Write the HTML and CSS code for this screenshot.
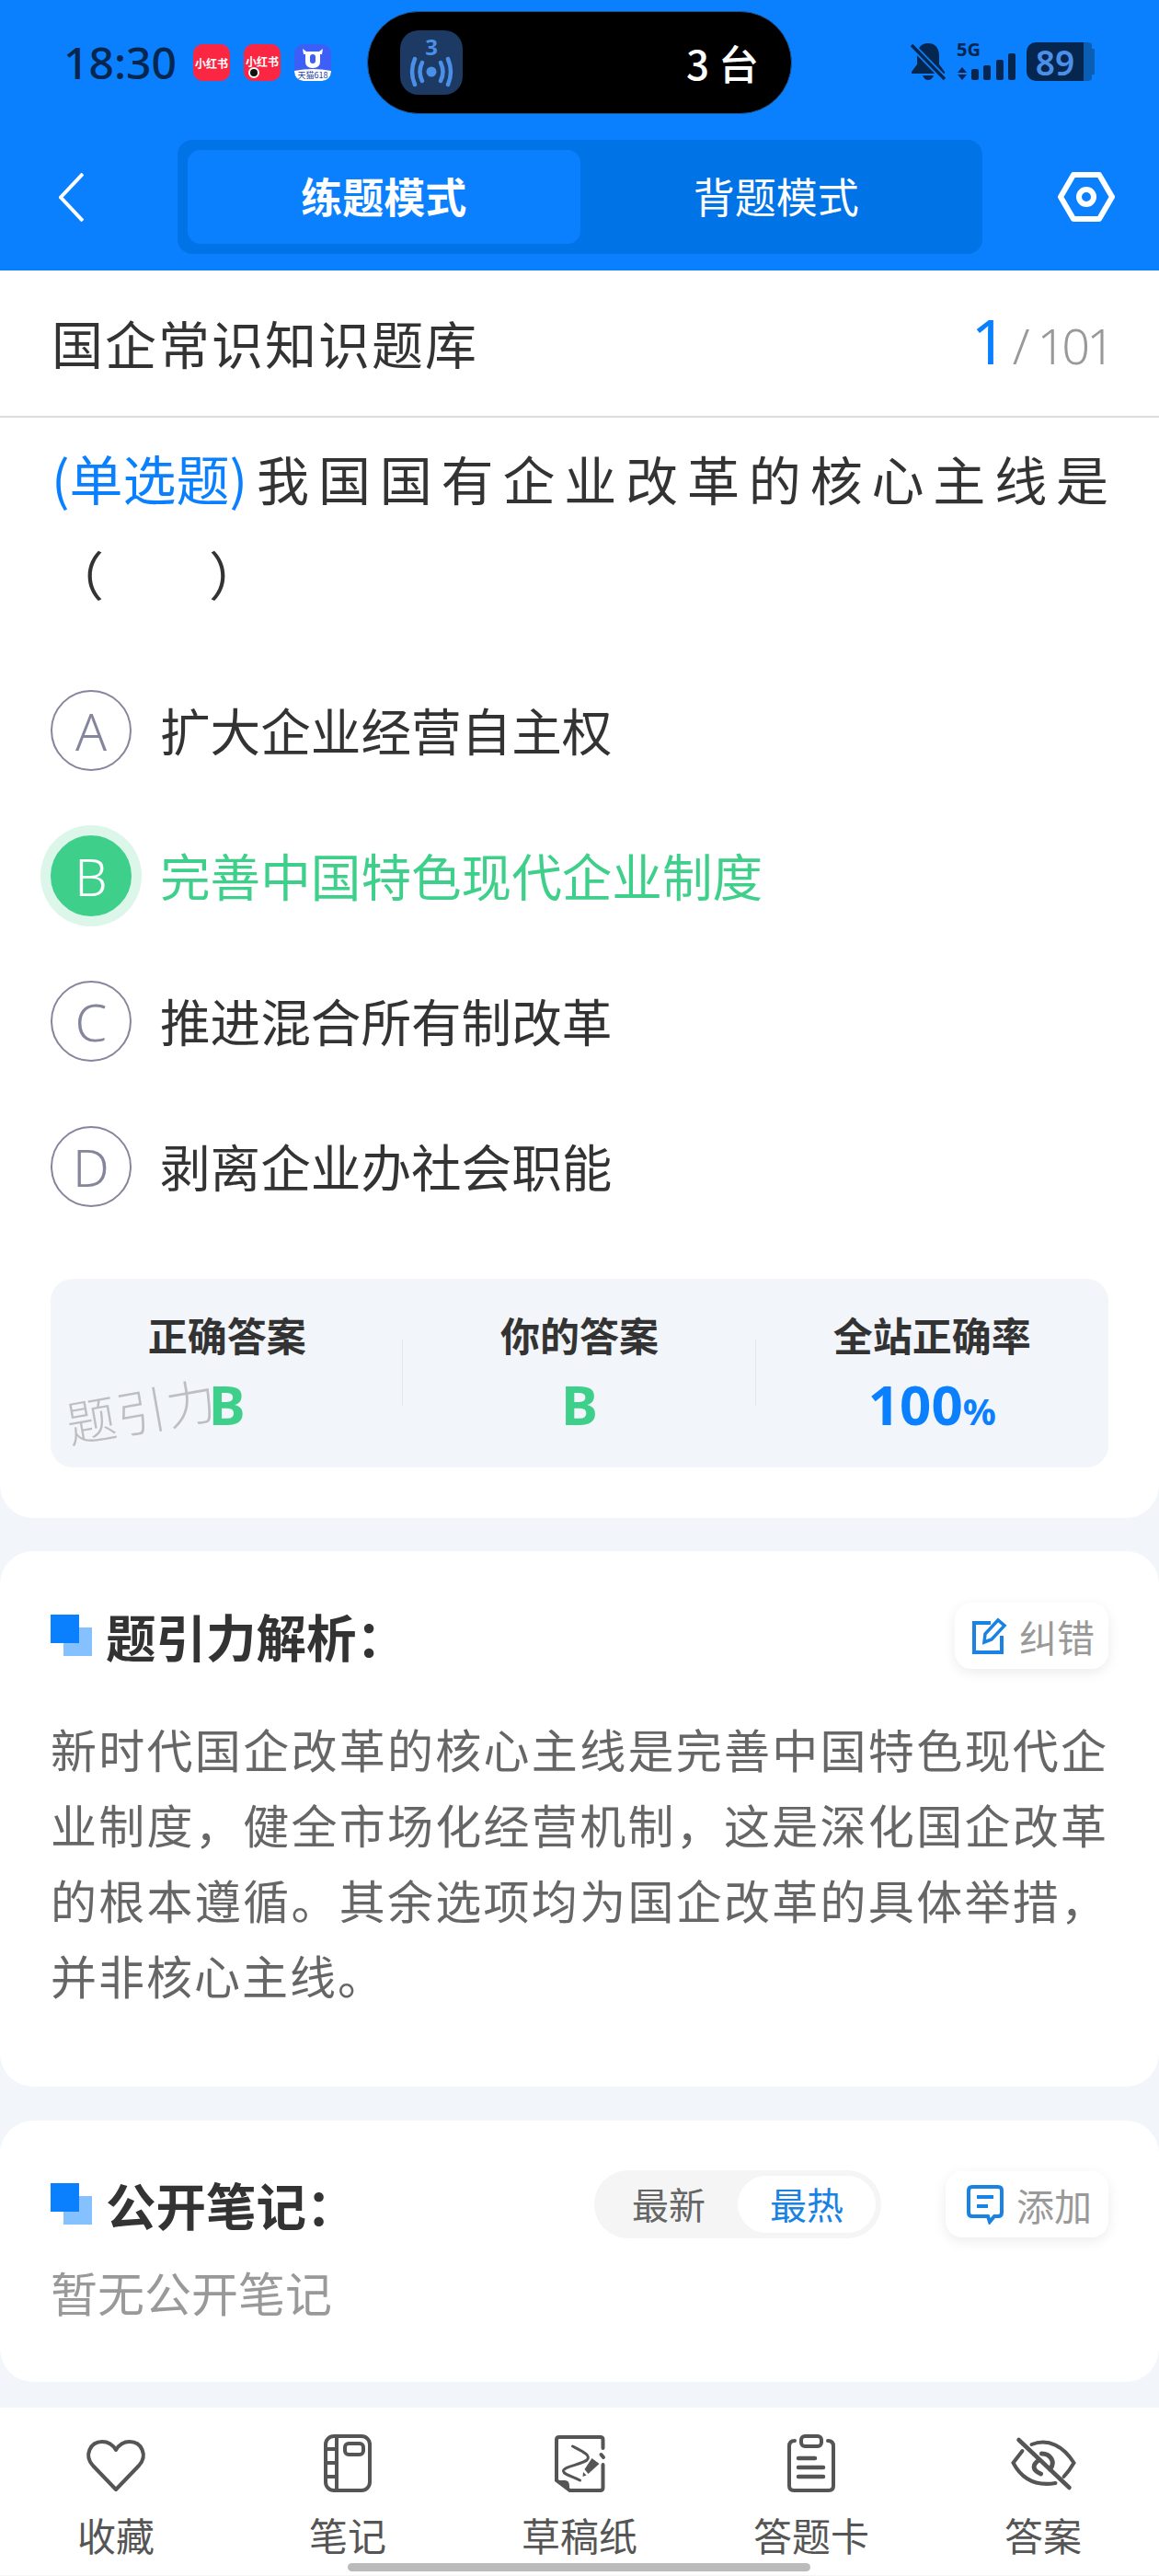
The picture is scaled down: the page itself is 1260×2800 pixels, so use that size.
FILE: index.html
```html
<!DOCTYPE html>
<html lang="zh-CN">
<head>
    <meta charset="UTF-8">
    <meta name="viewport" content="width=device-width, initial-scale=1.0">
    <title>国企常识知识题库</title>
    <link rel="stylesheet" href="styles.css">
</head>
<body>
    <header class="top">
        <div class="status">
            <span class="time">18:30</span>
            <div class="notify-icons">
                <span class="app-icon red">小红书</span>
                <span class="app-icon red dot">小红书</span>
                <span class="app-icon tmall">
                    <svg viewBox="0 0 40 40" width="40" height="40">
                        <path d="M0 30V10Q0 0 10 0H30Q40 0 40 10V30Z" fill="#3d5ff5"/>
                        <path d="M0 29Q20 25 40 29V30Q40 40 30 40H10Q0 40 0 30Z" fill="#fff"/>
                        <path d="M9 5L13 8H27L31 5L30 11H28V19Q28 26 20 26Q12 26 12 19V11H10Z" fill="#fff"/>
                        <rect x="17" y="11" width="6" height="10" rx="3" fill="#3d5ff5"/>
                    </svg>
                    <span class="tmall-text">天猫618</span>
                </span>
            </div>
            <div class="island">
                <div class="island-tile">
                    <span class="island-num">3</span>
                    <svg viewBox="0 0 52 34" width="52" height="34" fill="none" stroke="#4a90e8" stroke-width="4.5" stroke-linecap="round">
                        <circle cx="26" cy="17" r="5.5" fill="#4a90e8" stroke="none"/>
                        <path d="M16 7Q11 17 16 27M36 7Q41 17 36 27"/>
                        <path d="M8 3Q2 17 8 31M44 3Q50 17 44 31"/>
                    </svg>
                </div>
                <span class="island-text">3 台</span>
            </div>
            <div class="sys-icons">
                <svg class="bell" viewBox="0 0 38 42" width="38" height="42">
                    <path d="M19 1C10 1 7 8 7 15V24L1 32V34H37V32L31 24V15C31 8 28 1 19 1Z" fill="#04264f"/>
                    <path d="M13 36H25Q23 41 19 41Q15 41 13 36Z" fill="#04264f"/>
                    <path d="M1 3L37 40" stroke="#0a80ff" stroke-width="7"/>
                    <path d="M1 3L37 40" stroke="#04264f" stroke-width="3.5"/>
                </svg>
                <div class="signal">
                    <span class="fiveg">5G</span>
                    <svg viewBox="0 0 64 42" width="64" height="42" fill="#04264f">
                        <path d="M6 27L11 33H1ZM6 41L1 35H11Z"/>
                        <rect x="16" y="29" width="8" height="12" rx="2"/>
                        <rect x="29" y="25" width="8" height="16" rx="2"/>
                        <rect x="43" y="19" width="8" height="22" rx="2"/>
                        <rect x="56" y="12" width="8" height="29" rx="2"/>
                    </svg>
                </div>
                <div class="battery">
                    <span class="battery-body">89</span>
                    <span class="battery-rest"></span>
                </div>
            </div>
        </div>
        <nav class="nav">
            <svg class="back" viewBox="0 0 27 53" width="27" height="53" fill="none" stroke="#fff" stroke-width="4">
                <path d="M26 1L2 26.5L26 52"/>
            </svg>
            <div class="mode-tabs">
                <span class="mode-tab active">练题模式</span>
                <span class="mode-tab">背题模式</span>
            </div>
            <svg class="gear" viewBox="0 0 62 54" width="62" height="54" fill="none" stroke="#fff" stroke-width="6">
                <path d="M17 3H45L59 27L45 51H17L3 27Z" stroke-linejoin="round"/>
                <circle cx="31" cy="27" r="8"/>
            </svg>
        </nav>
    </header>

    <main class="content">
        <section class="card question-card">
            <div class="bank-row">
                <h1 class="bank-title">国企常识知识题库</h1>
                <div class="progress"><span class="cur">1</span><span class="sep">/</span>101</div>
            </div>
            <div class="question">
                <p class="q-line"><span class="q-type">(单选题)</span>我国国有企业改革的核心主线是</p>
                <p class="q-blank">（　　）</p>
            </div>
            <ul class="options">
                <li class="option"><span class="letter">A</span>扩大企业经营自主权</li>
                <li class="option right"><span class="letter">B</span>完善中国特色现代企业制度</li>
                <li class="option"><span class="letter">C</span>推进混合所有制改革</li>
                <li class="option"><span class="letter">D</span>剥离企业办社会职能</li>
            </ul>
            <div class="summary">
                <div class="stat">
                    <span class="stat-label">正确答案</span>
                    <span class="stat-value green">B</span>
                </div>
                <div class="stat">
                    <span class="stat-label">你的答案</span>
                    <span class="stat-value green">B</span>
                </div>
                <div class="stat">
                    <span class="stat-label">全站正确率</span>
                    <span class="stat-value blue">100<small>%</small></span>
                </div>
                <span class="watermark">题引力</span>
            </div>
        </section>

        <section class="card analysis-card">
            <div class="card-head">
                <h2 class="card-title">
                    <svg class="title-mark" viewBox="0 0 45 45" width="45" height="45"><rect x="14" y="14" width="31" height="31" fill="#85c0ff"/><rect width="31" height="31" fill="#0a80ff"/></svg>
                    题引力解析：
                </h2>
                <span class="mini-btn">
                    <svg viewBox="0 0 38 40" width="38" height="40" fill="none" stroke="#1a82e2" stroke-width="4">
                        <path d="M20 6H2V38H32V20"/>
                        <path d="M13 27L14 18L28 3L35 9L21 24Z" stroke-width="3.5"/>
                    </svg>
                    纠错
                </span>
            </div>
            <p class="analysis-text">新时代国企改革的核心主线是完善中国特色现代企业制度，健全市场化经营机制，这是深化国企改革的根本遵循。其余选项均为国企改革的具体举措，并非核心主线。</p>
        </section>

        <section class="card notes-card">
            <div class="card-head">
                <h2 class="card-title">
                    <svg class="title-mark" viewBox="0 0 45 45" width="45" height="45"><rect x="14" y="14" width="31" height="31" fill="#85c0ff"/><rect width="31" height="31" fill="#0a80ff"/></svg>
                    公开笔记：
                </h2>
                <div class="note-tools">
                    <div class="sort">
                        <span class="sort-item">最新</span>
                        <span class="sort-item active">最热</span>
                    </div>
                    <span class="mini-btn add">
                        <svg viewBox="0 0 42 44" width="42" height="44" fill="none" stroke="#1a82e2" stroke-width="4">
                            <path d="M7 3H35Q39 3 39 7V31Q39 35 35 35H31L26 41L24 35H7Q3 35 3 31V7Q3 3 7 3Z"/>
                            <path d="M12 14H30M12 24H24"/>
                        </svg>
                        添加
                    </span>
                </div>
            </div>
            <p class="empty-note">暂无公开笔记</p>
        </section>
    </main>

    <footer class="tabbar">
        <div class="tab-item">
            <svg viewBox="0 0 72 64" width="72" height="64" fill="none" stroke="#555" stroke-width="4">
                <path d="M36 61L11 35C1 24 8 9 21 9C28 9 33 13 36 18C39 13 44 9 51 9C64 9 71 24 61 35Z" stroke-linejoin="round"/>
            </svg>
            <span>收藏</span>
        </div>
        <div class="tab-item">
            <svg viewBox="0 0 72 64" width="72" height="64" fill="none" stroke="#555" stroke-width="4">
                <rect x="12" y="3" width="48" height="59" rx="9"/>
                <path d="M24 3V62M12 17H24M12 32H24M12 47H24"/>
                <rect x="33" y="11" width="20" height="12" rx="4"/>
            </svg>
            <span>笔记</span>
        </div>
        <div class="tab-item">
            <svg viewBox="0 0 72 64" width="72" height="64" fill="none" stroke="#555" stroke-width="4" stroke-linecap="round">
                <path d="M61.5 34V59Q61.5 62 58.5 62H25.5L11 51V7Q11 4 14 4H58.5Q61.5 4 61.5 7V16"/>
                <path d="M11 51H20Q25 51 25 57V63Z" fill="#555" stroke="none"/>
                <path d="M28.5 14C40 20 49 24 44 29C38 34 18 36 18.5 41C19 45 29 47 36.5 51" stroke-width="3"/>
                <path d="M49.5 27L57.5 33L45.5 44L41.5 39Z" fill="#555" stroke="none"/>
                <path d="M40 42L39.5 47L43.5 45.5Z" fill="#555" stroke="none"/>
                <path d="M59.5 23L62 26" stroke-width="4"/>
            </svg>
            <span>草稿纸</span>
        </div>
        <div class="tab-item">
            <svg viewBox="0 0 72 64" width="72" height="64" fill="none" stroke="#555" stroke-width="4" stroke-linecap="round">
                <path d="M18 8Q12 8 12 14V57Q12 62 17 62H55Q60 62 60 57V14Q60 8 54 8"/>
                <rect x="25" y="3" width="22" height="11" rx="4"/>
                <path d="M22 27H40M22 37H49M22 47H49" stroke-width="4.5"/>
            </svg>
            <span>答题卡</span>
        </div>
        <div class="tab-item">
            <svg viewBox="0 0 72 64" width="72" height="64" fill="none" stroke="#555" stroke-width="4" stroke-linecap="round">
                <path d="M9.5 7L64.5 59" stroke-width="4.5"/>
                <path d="M23.5 12C42 5 58 14 69.5 32Q65 40 58.5 47"/>
                <path d="M13.5 19L3.5 32C12 48 26 58 49.5 54"/>
                <path d="M31.5 29C24 34 24 40 33.5 44M34.5 22C44 22 50 31 43.5 39" stroke-width="5"/>
            </svg>
            <span>答案</span>
        </div>
        <span class="home-bar"></span>
    </footer>
</body>
</html>
```

FILE: styles.css
```css
* {
    box-sizing: border-box;
}
body {
    margin: 0;
    width: 1260px;
    height: 2800px;
    overflow: hidden;
    background: #f2f5f9;
    font-family: "Noto Sans CJK SC", "Noto Sans", sans-serif;
    color: #333;
}
h1, h2, p, ul {
    margin: 0;
    padding: 0;
}

/* top blue area */
.top {
    height: 294px;
    background: #0a80ff;
}
.status {
    display: flex;
    align-items: flex-start;
    height: 152px;
    padding: 12px 0 0 69px;
}
.time {
    width: 141px;
    margin-top: 31px;
    font-family: "Noto Sans", sans-serif;
    font-size: 48px;
    line-height: 50px;
    font-weight: 500;
    color: #04264f;
}
.notify-icons {
    display: flex;
    gap: 15px;
    width: 189px;
    margin-top: 36px;
}
.app-icon {
    position: relative;
    display: flex;
    align-items: center;
    justify-content: center;
    width: 40px;
    height: 40px;
    border-radius: 10px;
    font-size: 12px;
    font-weight: 700;
    color: #fff;
    overflow: hidden;
}
.red {
    background: #fb2742;
}
.dot {
    padding-bottom: 3px;
}
.dot::after {
    content: "";
    position: absolute;
    left: 5px;
    bottom: 3px;
    width: 8px;
    height: 8px;
    border-radius: 50%;
    background: #111;
    border: 2px solid #fff;
}
.tmall svg {
    display: block;
}
.tmall-text {
    position: absolute;
    left: 0;
    right: 0;
    bottom: 1px;
    font-size: 9px;
    line-height: 10px;
    font-weight: 400;
    color: #223c9c;
    text-align: center;
}
.island {
    display: flex;
    align-items: center;
    justify-content: space-between;
    width: 462px;
    height: 112px;
    padding: 0 35px 0 35px;
    border-radius: 56px;
    background: #000;
    border: 1px solid #1d5a9e;
}
.island-tile {
    display: flex;
    flex-direction: column;
    align-items: center;
    width: 68px;
    height: 70px;
    padding-top: 8px;
    border-radius: 20px;
    background: #1c3a63;
}
.island-num {
    font-family: "Noto Sans", sans-serif;
    font-size: 24px;
    line-height: 20px;
    font-weight: 700;
    color: #4a90e8;
}
.island-text {
    font-size: 44px;
    line-height: 50px;
    font-weight: 500;
    color: #fff;
}
.sys-icons {
    display: flex;
    align-items: flex-start;
    margin: 34px 0 0 129px;
}
.bell {
    display: block;
}
.signal {
    position: relative;
    width: 64px;
    height: 42px;
    margin-left: 12px;
}
.signal svg {
    display: block;
}
.fiveg {
    position: absolute;
    left: 0;
    top: -3px;
    font-family: "Noto Sans", sans-serif;
    font-size: 20px;
    line-height: 22px;
    font-weight: 700;
    color: #04264f;
}
.battery {
    display: flex;
    align-items: center;
    margin-left: 12px;
}
.battery-body {
    display: flex;
    align-items: center;
    justify-content: center;
    width: 62px;
    height: 42px;
    border-radius: 10px 0 0 10px;
    background: #04264f;
    font-family: "Noto Sans", sans-serif;
    font-size: 37px;
    font-weight: 600;
    color: #4a90e8;
}
.battery-rest {
    width: 12px;
    height: 42px;
    border-radius: 0 8px 8px 0;
    background: linear-gradient(90deg, #0a5fb5 9px, transparent 9px), linear-gradient(#0a80ff 7px, #0a5fb5 7px, #0a5fb5 35px, #0a80ff 35px);
}
.nav {
    display: flex;
    align-items: center;
    height: 124px;
    padding-left: 64px;
}
.back {
    flex: none;
}
.mode-tabs {
    display: flex;
    width: 875px;
    height: 124px;
    margin-left: 102px;
    padding: 11px;
    border-radius: 16px;
    background: #0073e6;
}
.mode-tab {
    width: 427px;
    border-radius: 14px;
    text-align: center;
    font-size: 45px;
    line-height: 100px;
    color: #fff;
}
.mode-tab.active {
    background: #0a80ff;
    font-weight: 700;
}
.gear {
    flex: none;
    margin-left: 82px;
}

/* cards */
.content {
    display: flex;
    flex-direction: column;
}
.card {
    background: #fff;
    border-radius: 36px;
}
.question-card {
    border-radius: 0 0 36px 36px;
    padding-bottom: 55px;
}
.bank-row {
    display: flex;
    align-items: center;
    justify-content: space-between;
    height: 160px;
    padding: 0 52px 0 56px;
    border-bottom: 2px solid #ddd;
}
.bank-title {
    margin-top: -4px;
    font-size: 56px;
    font-weight: 400;
    letter-spacing: 2px;
    color: #333;
}
.progress {
    margin-top: -8px;
    font-family: "Noto Sans", sans-serif;
    font-size: 54px;
    font-weight: 300;
    letter-spacing: -4px;
    color: #999;
}
.cur {
    font-size: 68px;
    font-weight: 400;
    color: #0a80ff;
}
.sep {
    margin: 0 12px 0 10px;
}
.question {
    padding: 14px 55px 0 56px;
    font-size: 57px;
    line-height: 103px;
}
.q-line {
    text-align: justify;
    text-align-last: justify;
}
.q-type {
    display: inline-block;
    font-size: 58px;
    color: #0a80ff;
}
.options {
    list-style: none;
    margin-top: 40px;
    padding: 0 55px;
}
.option {
    display: flex;
    align-items: center;
    gap: 31px;
    height: 158px;
    padding-bottom: 2px;
    font-size: 54.6px;
    color: #333;
}
.letter {
    display: flex;
    align-items: center;
    justify-content: center;
    flex: none;
    width: 88px;
    height: 88px;
    margin-top: 4px;
    border: 2px solid #85859c;
    border-radius: 50%;
    font-family: "Noto Sans", sans-serif;
    font-size: 56px;
    font-weight: 300;
    color: #85859c;
}
.option.right {
    color: #3ed08a;
}
.option.right .letter {
    border-color: #3ed08a;
    background: #3ed08a;
    color: #fff;
    box-shadow: 0 0 0 11px #dcf6e9;
}
.summary {
    position: relative;
    display: grid;
    grid-template-columns: repeat(3, 1fr);
    height: 205px;
    margin: 44px 55px 0;
    border-radius: 24px;
    background: #f2f5f9;
}
.stat {
    position: relative;
    display: flex;
    flex-direction: column;
    align-items: center;
    padding-top: 33px;
}
.stat + .stat::before {
    content: "";
    position: absolute;
    left: -1px;
    top: 66px;
    height: 72px;
    border-left: 1px solid #e3e6ea;
}
.stat-label {
    font-size: 43px;
    line-height: 54px;
    font-weight: 700;
    color: #333;
}
.stat-value {
    margin-top: 14px;
    font-family: "Noto Sans", sans-serif;
    font-size: 60px;
    line-height: 70px;
    font-weight: 700;
}
.stat-value small {
    font-size: 40px;
}
.green {
    color: #3ed08a;
}
.blue {
    color: #0a80ff;
}
.watermark {
    position: absolute;
    left: 16px;
    top: 107px;
    font-size: 54px;
    line-height: 70px;
    font-weight: 300;
    letter-spacing: 1px;
    color: #bcbec2;
    transform: rotate(-10deg);
}
.analysis-card {
    margin-top: 36px;
    padding: 55px 55px 81px;
}
.notes-card {
    margin-top: 37px;
    padding: 54px 55px 63px;
}
.card-head {
    display: flex;
    align-items: center;
    justify-content: space-between;
    height: 73px;
}
.card-title {
    display: flex;
    align-items: center;
    gap: 15px;
    font-size: 54.5px;
    font-weight: 700;
    color: #333;
}
.title-mark {
    flex: none;
}
.mini-btn {
    display: flex;
    align-items: center;
    justify-content: center;
    gap: 13px;
    width: 167px;
    height: 72px;
    padding-left: 4px;
    border-radius: 18px;
    background: #fff;
    box-shadow: 0 4px 14px rgba(0, 0, 0, 0.08);
    font-size: 41px;
    color: #999;
}
.mini-btn.add {
    width: 177px;
}
.analysis-text {
    margin-top: 45px;
    font-size: 50px;
    line-height: 82px;
    letter-spacing: 2px;
    text-align: justify;
    color: #666;
}
.note-tools {
    display: flex;
    align-items: center;
    gap: 70px;
}
.sort {
    display: flex;
    align-items: center;
    justify-content: flex-end;
    width: 312px;
    height: 74px;
    padding-right: 6px;
    border-radius: 37px;
    background: #f5f5f5;
}
.sort-item {
    width: 150px;
    height: 62px;
    border-radius: 31px;
    text-align: center;
    font-size: 40px;
    line-height: 60px;
    color: #666;
}
.sort-item.active {
    background: #fff;
    color: #1a82e2;
}
.empty-note {
    margin-top: 24px;
    font-size: 51px;
    line-height: 70px;
    color: #999;
}

/* bottom tabs */
.tabbar {
    position: relative;
    display: grid;
    grid-template-columns: repeat(5, 252px);
    height: 182px;
    margin-top: 28px;
    padding-top: 28px;
    background: #fff;
}
.tab-item {
    display: flex;
    flex-direction: column;
    align-items: center;
    gap: 18px;
    font-size: 42px;
    line-height: 56px;
    color: #555;
}
.tab-item svg {
    display: block;
}
.home-bar {
    position: absolute;
    left: 378px;
    bottom: 4px;
    width: 503px;
    height: 9px;
    border-radius: 5px;
    background: #bbb;
}
```
